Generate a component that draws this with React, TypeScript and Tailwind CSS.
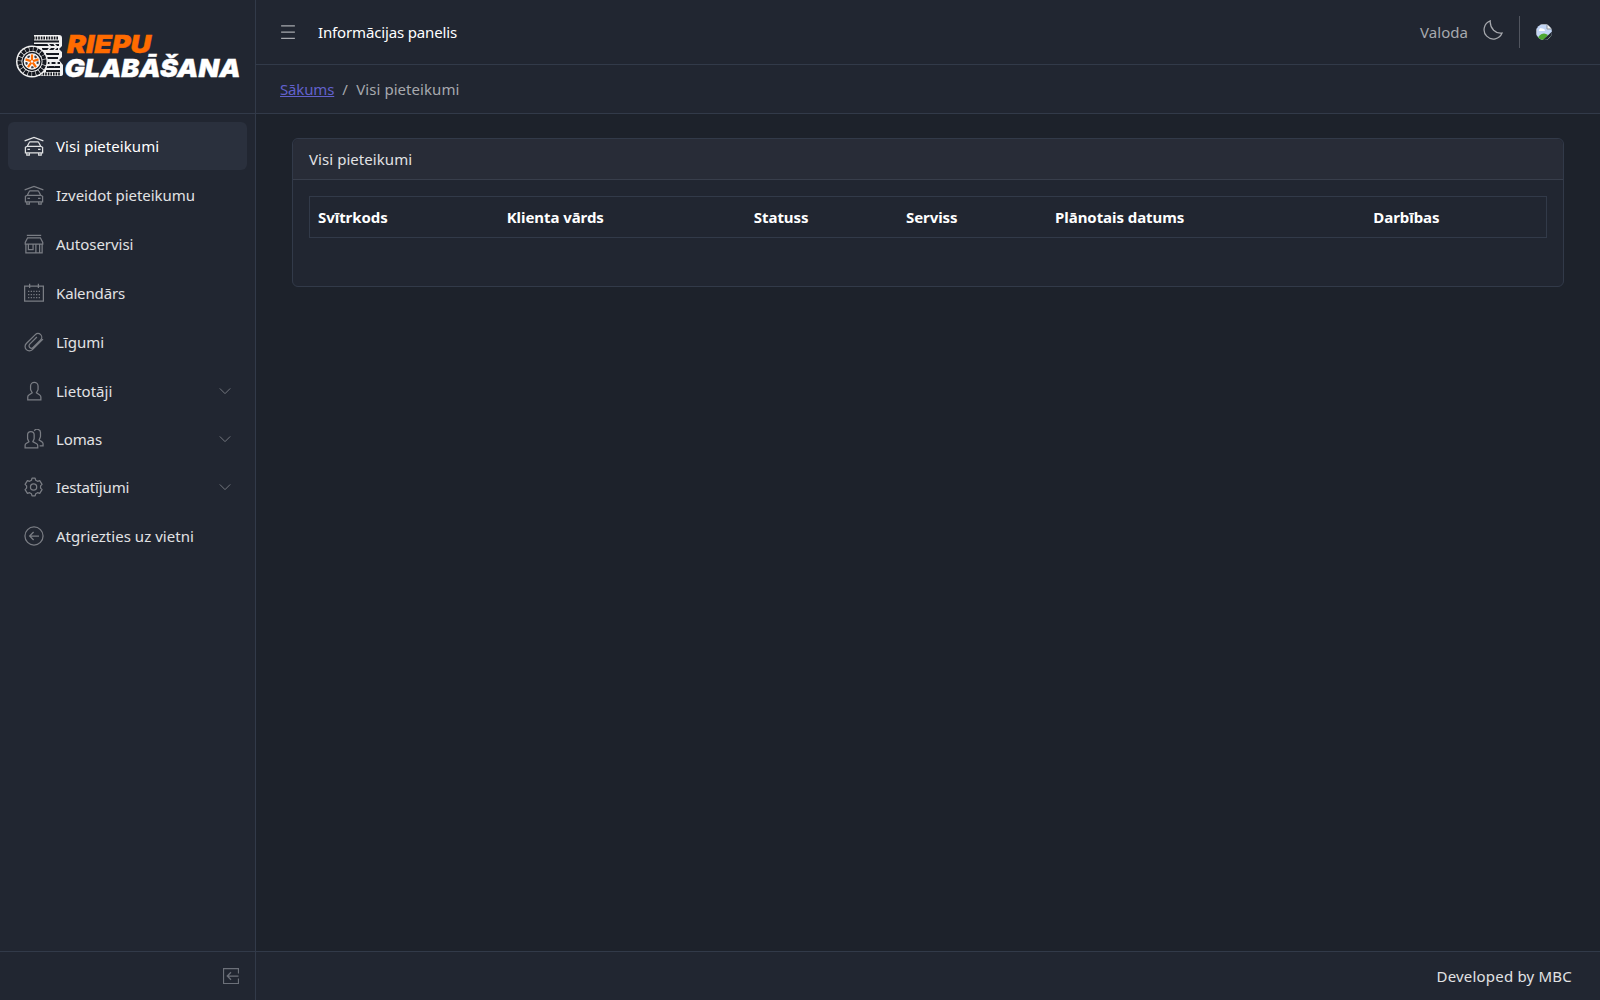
import type { ReactNode } from 'react'

interface NavItem {
  label: string
  icon: ReactNode
  tracking: string
  active?: boolean
  group?: boolean
}

function Icon({ children, className = 'size-5' }: { children: ReactNode; className?: string }) {
  return (
    <svg viewBox="0 0 512 512" fill="none" stroke="currentColor" strokeWidth={32} className={`shrink-0 ${className}`}>
      {children}
    </svg>
  )
}

const carIcon = (
  <Icon>
    <path d="M16 124L256 36L496 124" />
    <path d="M36 288L84 262L134 168Q142 152 158 152H354Q370 152 378 168L428 262L476 288V432H36ZM92 264H420" />
    <path d="M72 432V488H136V432M376 432V488H440V432M88 344H152M360 344H424" />
  </Icon>
)

const shopIcon = (
  <Icon>
    <path d="M72 32H440M92 96H420L480 216V256H32V216Z" />
    <path d="M48 256V480H464V256M112 256V400H232V256M304 480V256M400 256V480" />
  </Icon>
)

const calendarIcon = (
  <Icon>
    <path d="M16 80H496V464H16ZM144 16V128M368 16V128" />
    <path d="M104 216H408M104 296H408M104 376H408" strokeDasharray="32 36" />
  </Icon>
)

const clipIcon = (
  <Icon>
    <path d="M486 182L216 452A110 110 0 0 1 60 296L290 66A96 96 0 0 1 426 202L232 396A60 60 0 0 1 147 311L330 128" />
  </Icon>
)

const userIcon = (
  <Icon>
    <path d="M96 480V411A64 64 0 0 1 125 357L210 302L176 238A64 64 0 0 1 168 208V128A96 96 0 0 1 360 128V208A64 64 0 0 1 352 238L318 302L403 357A64 64 0 0 1 432 411V480Z" />
  </Icon>
)

const peopleIcon = (
  <Icon>
    <path d="M28 480V420A60 60 0 0 1 54 370L126 324L98 266A60 60 0 0 1 92 238V148A84 84 0 0 1 260 148V238A60 60 0 0 1 254 266L226 324L324 378A60 60 0 0 1 352 428V480Z" />
    <path d="M264 46A86 86 0 0 1 422 98V188A60 60 0 0 1 414 218L386 284L462 330A60 60 0 0 1 488 380V432H400" />
  </Icon>
)

const settingsIcon = (
  <Icon>
    <circle cx="245" cy="256" r="80" />
    <path d="M206 28H284L300 84L346 110L402 94L462 190L424 228V284L462 322L402 418L346 402L300 428L284 484H206L190 428L144 402L88 418L28 322L66 284V228L28 190L88 94L144 110L190 84Z" strokeLinejoin="round" />
  </Icon>
)

const backIcon = (
  <Icon>
    <circle cx="256" cy="256" r="232" />
    <path d="M246 154L144 256L246 358M144 256H384" />
  </Icon>
)

const navItems: NavItem[] = [
  { label: 'Visi pieteikumi', icon: carIcon, tracking: 'tracking-[0.06px]', active: true },
  { label: 'Izveidot pieteikumu', icon: carIcon, tracking: 'tracking-[-0.03px]' },
  { label: 'Autoservisi', icon: shopIcon, tracking: 'tracking-[-0.03px]' },
  { label: 'Kalendārs', icon: calendarIcon, tracking: 'tracking-[-0.15px]' },
  { label: 'Līgumi', icon: clipIcon, tracking: 'tracking-[0px]' },
  { label: 'Lietotāji', icon: userIcon, tracking: 'tracking-[0px]', group: true },
  { label: 'Lomas', icon: peopleIcon, tracking: 'tracking-[-0.12px]', group: true },
  { label: 'Iestatījumi', icon: settingsIcon, tracking: 'tracking-[-0.15px]', group: true },
  { label: 'Atgriezties uz vietni', icon: backIcon, tracking: 'tracking-[0.03px]' },
]

const columns = [
  { label: 'Svītrkods', width: 'w-[189px]' },
  { label: 'Klienta vārds', width: 'w-[247px]' },
  { label: 'Statuss', width: 'w-[152px]' },
  { label: 'Serviss', width: 'w-[149px]' },
  { label: 'Plānotais datums', width: 'w-[318px]' },
  { label: 'Darbības', width: 'w-[181px]' },
]

function Logo() {
  return (
    <svg width="228" height="52" viewBox="0 0 228 52" className="overflow-visible">
      {/* stacked tyres */}
      <path d="M16 4H43Q46 4 46 7V15L43 18L46 21V26L43 29L47 34V43Q47 45 44 45H18V4Z" fill="#f2f2f2" />
      <path d="M17 7H43M24 43H44" stroke="#15181f" strokeWidth="3" strokeDasharray="1.6 1" />
      <path d="M17 10.5H43M17 14H43M26 18H42M30 23H43M30 27H42M30 32H44M30 36H44M30 40H44" stroke="#15181f" strokeWidth="2" />
      <path d="M32 13L35 16L32 19M38 13L41 16L38 19M32 29L35 32L32 35M38 29L41 32L38 35" stroke="#eee" strokeWidth="1.5" fill="none" />
      {/* front wheel */}
      <circle cx="16" cy="30.5" r="16" fill="#f2f2f2" />
      <circle cx="16" cy="30.5" r="12.5" fill="none" stroke="#15181f" strokeWidth="4" strokeDasharray="3.4 0.6" />
      <circle cx="16" cy="30.5" r="9" fill="#f5f5f5" stroke="#15181f" strokeWidth="1.4" />
      <circle cx="16" cy="30.5" r="5.8" fill="none" stroke="#3b3d44" strokeWidth="2" strokeDasharray="2.4 4.9" />
      <path d="M16 30.5V23.5M16 30.5L22.5 28.4M16 30.5L20 36.2M16 30.5L12 36.2M16 30.5L9.5 28.4" stroke="#ff6b00" strokeWidth="2.2" />
      <circle cx="16" cy="30.5" r="1.2" fill="#f5f5f5" />
      <text x="51" y="21.5" textLength="84" lengthAdjust="spacingAndGlyphs" className="fill-[#ff6b00] stroke-[#ff6b00] stroke-[0.4px] font-['Inter',sans-serif] text-[24.5px] font-black tracking-normal italic">RIEPU</text>
      <text x="48.5" y="46" textLength="176" lengthAdjust="spacingAndGlyphs" className="fill-white stroke-white stroke-[0.4px] font-['Inter',sans-serif] text-[25px] font-black tracking-normal italic">GLABĀŠANA</text>
    </svg>
  )
}

function BrokenImage() {
  return (
    <svg width="16" height="16" viewBox="0 0 16 16" className="rounded-full">
      <path d="M0 0H11L16 5V16H0Z" fill="#c3d6f6" />
      <path d="M11 0V5H16Z" fill="#f2f2f2" stroke="#8f969f" />
      <path d="M3 6Q4 3 6 4.500Q9 4 9 7H3Z" fill="#fff" />
      <path d="M1 16Q3 9.500 8 9.500Q10 9.500 12 11L8 16Z" fill="#4ea832" />
      <path d="M0.500 16V0.500H11" fill="none" stroke="#a4a9b1" />
      <path d="M7 16L16 7.500V11L11 16Z" fill="#212631" />
      <path d="M11 16L16 11V16Z" fill="#7dbb6b" />
      <path d="M11 15.500H15.500V11" fill="none" stroke="#c0c4ca" />
    </svg>
  )
}

export default function App() {
  return (
    <div className="flex h-screen bg-[#1d222b] font-['Noto_Sans','Open_Sans',sans-serif] text-[15px] leading-6 tracking-[-0.15px] text-[#e1e2e4]">
      {/* Sidebar */}
      <aside className="flex w-64 shrink-0 flex-col border-r border-[#323a49] bg-[#212631]">
        <div className="flex h-[114px] shrink-0 items-center border-b border-[#323a49] pl-4">
          <Logo />
        </div>
        <nav className="flex-1 p-2">
          {navItems.map((item) => (
            <a
              key={item.label}
              className={`flex items-center rounded-md px-4 ${item.tracking} ${item.group ? 'h-12' : 'mb-px h-12 last:h-[49px]'} ${item.active ? 'bg-[#2a303d] text-white' : ''}`}
            >
              <span className={`mr-3 ${item.active ? 'text-[#e1e2e4]' : 'text-[#7a7d84]'}`}>{item.icon}</span>
              {item.label}
              {item.group && (
                <Icon className="ml-auto size-3 text-[#7a7d84]">
                  <path d="M34 146L256 368L478 146" strokeWidth="40" />
                </Icon>
              )}
            </a>
          ))}
        </nav>
        <div className="flex h-[49px] items-center justify-end border-t border-[#323a49] pr-4">
          <Icon className="size-4 text-[#6c7079]">
            <path d="M496 176V16H16V496H496V336M256 136L136 256L256 376M136 256H496" strokeWidth="40" />
          </Icon>
        </div>
      </aside>

      <div className="flex min-w-0 flex-1 flex-col">
        {/* Header */}
        <header className="flex h-[65px] shrink-0 items-center border-b border-[#323a49] bg-[#212631] pr-12 pl-[22px]">
          <Icon className="size-5 text-[#a7a9ae]">
            <path d="M80 96H432M80 256H432M80 416H432" />
          </Icon>
          <span className="ml-5 text-white">Informācijas panelis</span>
          <div className="ml-auto flex items-center text-[#a7a9ae]">
            <span className="tracking-[0.03px]">Valoda</span>
            <Icon className="mb-1 ml-[15px] size-5">
              <path d="M186 24A238 238 0 1 0 488 334Q370 356 272 262Q174 160 186 24Z" />
            </Icon>
            <div className="mx-4 h-8 w-px bg-[#51555f]" />
            <BrokenImage />
          </div>
        </header>

        {/* Breadcrumb */}
        <div className="flex h-[49px] shrink-0 items-center gap-2 border-b border-[#323a49] bg-[#212631] px-6 text-[#a7a9ae]">
          <a className="text-[#6261cc] underline">Sākums</a>
          <span className="w-[6px]">/</span>
          <span className="tracking-[0.06px]">Visi pieteikumi</span>
        </div>

        <main className="flex-1 px-9 pt-6">
          <div className="h-[149px] rounded-md border border-[#323a49] bg-[#212631]">
            <div className="rounded-t-md border-b border-[#383e4b] bg-[#282c37] px-4 py-2 tracking-[0.06px]">Visi pieteikumi</div>
            <div className="p-4">
              <table className="w-full table-fixed border-collapse border border-[#323a49]">
                <thead>
                  <tr>
                    {columns.map((col) => (
                      <th key={col.label} className={`${col.width} p-2 text-left font-bold tracking-[-0.06px] text-white`}>
                        {col.label}
                      </th>
                    ))}
                  </tr>
                </thead>
              </table>
            </div>
          </div>
        </main>

        {/* Footer */}
        <footer className="flex h-[49px] shrink-0 items-center justify-end border-t border-[#323a49] bg-[#212631] pr-7 tracking-[0.2px]">
          Developed by MBC
        </footer>
      </div>
    </div>
  )
}
